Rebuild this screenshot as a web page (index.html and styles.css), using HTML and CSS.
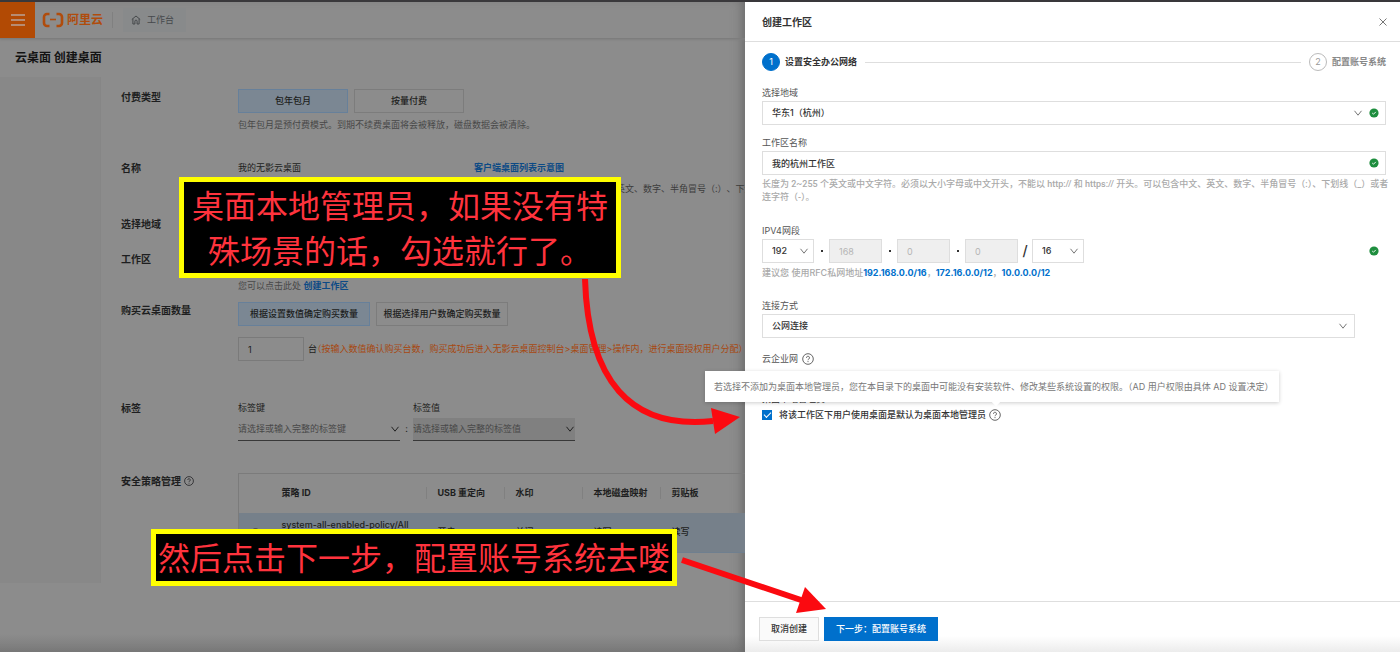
FILE: index.html
```html
<!DOCTYPE html>
<html lang="zh-CN">
<head>
<meta charset="utf-8">
<title>云桌面 创建桌面</title>
<link rel="stylesheet" href="styles.css">
</head>
<body>
<svg class="defs" width="0" height="0" aria-hidden="true">
  <symbol id="chevron" viewBox="0 0 10 10"><path d="M1.5 2.8 5 7.2 8.500 2.800" fill="none" stroke="currentColor"/></symbol>
  <symbol id="ok" viewBox="0 0 10 10"><circle cx="5" cy="5" r="4.600" fill="#1e8e3e"/><path d="M3.200 5 4.500 6.200 6.800 3.900" fill="none" stroke="#fff" stroke-width="0.900"/></symbol>
  <symbol id="help" viewBox="0 0 12 12"><circle cx="6" cy="6" r="5.300" fill="none" stroke="currentColor" stroke-width="0.900"/><path d="M4.500 4.800a1.500 1.500 0 1 1 2.300 1.200c-.6.400-.8.600-.8 1.200M6 8.100v1" fill="none" stroke="currentColor" stroke-width="0.900"/></symbol>
</svg>
<div class="screen">
  <div class="page">
    <header class="topbar">
      <button class="menu" type="button" aria-label="菜单">
        <svg width="16" height="14" viewBox="0 0 16 14"><path d="M1 2h14M1 7h14M1 12h14" stroke="#b9a396" stroke-width="1.300"/></svg>
      </button>
      <a class="logo" href="#">
        <svg width="22" height="16" viewBox="0 0 22 16"><path d="M7.500 2H5a3 3 0 0 0-3 3v6a3 3 0 0 0 3 3h2.500M14.500 2H17a3 3 0 0 1 3 3v6a3 3 0 0 1-3 3h-2.500" fill="none" stroke="currentColor" stroke-width="2.600"/><path d="M8 7.500h6" stroke="currentColor" stroke-width="1.600"/></svg>
        <span>阿里云</span>
      </a>
      <a class="workbench" href="#">
        <svg width="10" height="10" viewBox="0 0 10 10"><path d="M.8 4.500 5 1l4.200 3.500M1.900 3.800V9h2V6.200a1.100 1.100 0 0 1 2.200 0V9h2V3.800" fill="none" stroke="currentColor"/></svg>
        <span>工作台</span>
      </a>
    </header>
    <h1 class="page-title">云桌面 创建桌面</h1>
    <div class="body">
      <aside class="side"></aside>
      <main class="form">
        <section class="row row-pay">
          <h2>付费类型</h2>
          <div>
            <div class="options"><button type="button" class="opt opt-on opt-s">包年包月</button><button type="button" class="opt opt-s">按量付费</button></div>
            <p class="note">包年包月是预付费模式。到期不续费桌面将会被释放，磁盘数据会被清除。</p>
          </div>
        </section>
        <section class="row row-name">
          <h2>名称</h2>
          <div>
            <div class="name-line"><span>我的无影云桌面</span><a href="#">客户端桌面列表示意图</a></div>
            <p class="name-note">英文、数字、半角冒号（:）、下划线</p>
          </div>
        </section>
        <section class="row row-region"><h2>选择地域</h2></section>
        <section class="row row-space">
          <h2>工作区</h2>
          <p class="note space-note">您可以点击此处 <a href="#">创建工作区</a></p>
        </section>
        <section class="row row-count">
          <h2>购买云桌面数量</h2>
          <div>
            <div class="options"><button type="button" class="opt opt-on opt-l">根据设置数值确定购买数量</button><button type="button" class="opt opt-l">根据选择用户数确定购买数量</button></div>
            <div class="count"><input id="count" type="text" value="1"><label for="count">台<em>（按输入数值确认购买台数，购买成功后进入无影云桌面控制台&gt;桌面管理&gt;操作内，进行桌面授权用户分配）</em></label></div>
          </div>
        </section>
        <section class="row row-tag">
          <h2>标签</h2>
          <div class="tags">
            <label class="tag">标签键<span class="line-select"><select><option>请选择或输入完整的标签键</option></select><svg class="chev"><use href="#chevron"/></svg></span></label>
            <span class="colon">:</span>
            <label class="tag">标签值<span class="line-select filled"><select><option>请选择或输入完整的标签值</option></select><svg class="chev"><use href="#chevron"/></svg></span></label>
          </div>
        </section>
        <section class="row row-policy">
          <h2>安全策略管理 <svg class="help-s"><use href="#help"/></svg></h2>
          <table class="policy">
            <thead><tr><th class="c-radio"></th><th class="c-id">策略 ID</th><th class="c-mid">USB 重定向</th><th class="c-mid">水印</th><th class="c-mid">本地磁盘映射</th><th class="c-last">剪贴板</th></tr></thead>
            <tbody><tr><td><input type="radio" aria-label="选择策略"></td><td class="policy-id">system-all-enabled-policy/All</td><td>开启</td><td>关闭</td><td>读写</td><td>读写</td></tr></tbody>
          </table>
        </section>
      </main>
    </div>
  </div>

  <section class="drawer">
    <header class="drawer-head">
      <h2>创建工作区</h2>
      <button type="button" class="close" aria-label="关闭"><svg width="10" height="10" viewBox="0 0 10 10"><path d="M1.500 1.500l7 7M8.500 1.500l-7 7" stroke="#666" stroke-width="0.900"/></svg></button>
    </header>
    <div class="drawer-body">
      <ol class="steps">
        <li class="step step-on"><b>1</b><span>设置安全办公网络</span></li>
        <li class="step-line"></li>
        <li class="step"><b>2</b><span>配置账号系统</span></li>
      </ol>
      <div class="field">
        <label for="region">选择地域</label>
        <div class="control"><select id="region"><option>华东1（杭州）</option></select><svg class="chev chev-in"><use href="#chevron"/></svg><svg class="ok"><use href="#ok"/></svg></div>
      </div>
      <div class="field">
        <label for="wsname">工作区名称</label>
        <div class="control"><input id="wsname" type="text" value="我的杭州工作区"><svg class="ok"><use href="#ok"/></svg></div>
        <p class="hint hint-name">长度为 2~255 个英文或中文字符。必须以大小字母或中文开头，不能以 http:// 和 https:// 开头。可以包含中文、英文、数字、半角冒号（:）、下划线（_）或者<br>连字符（-）。</p>
      </div>
      <div class="field field-ip">
        <label for="ip1">IPV4网段</label>
        <div class="ip">
          <div class="control"><select id="ip1"><option>192</option></select><svg class="chev"><use href="#chevron"/></svg></div>
          <span class="dot"></span><input type="text" value="168" disabled aria-label="第二段">
          <span class="dot"></span><input type="text" value="0" disabled aria-label="第三段">
          <span class="dot"></span><input type="text" value="0" disabled aria-label="第四段">
          <span class="slash">/</span>
          <div class="control"><select aria-label="掩码"><option>16</option></select><svg class="chev"><use href="#chevron"/></svg></div>
          <svg class="ok ok-end"><use href="#ok"/></svg>
        </div>
        <p class="hint">建议您 使用RFC私网地址<a href="#">192.168.0.0/16</a>，<a href="#">172.16.0.0/12</a>，<a href="#">10.0.0.0/12</a></p>
      </div>
      <div class="field field-link">
        <label for="link">连接方式</label>
        <div class="control"><select id="link"><option>公网连接</option></select><svg class="chev"><use href="#chevron"/></svg></div>
      </div>
      <div class="label-row">云企业网 <svg class="help"><use href="#help"/></svg></div>
      <div class="admin">
        <div class="admin-title">桌面本地管理员</div>
        <div class="check"><input type="checkbox" id="admin" checked><label for="admin">将该工作区下用户使用桌面是默认为桌面本地管理员</label><svg class="help"><use href="#help"/></svg></div>
        <div class="tooltip" role="tooltip">若选择不添加为桌面本地管理员，您在本目录下的桌面中可能没有安装软件、修改某些系统设置的权限。（AD 用户权限由具体 AD 设置决定）</div>
      </div>
    </div>
    <footer class="drawer-foot">
      <button type="button" class="btn">取消创建</button>
      <button type="button" class="btn btn-primary">下一步：配置账号系统</button>
    </footer>
  </section>

  <div class="callout callout-top">桌面本地管理员，如果没有特<br>殊场景的话，勾选就行了。</div>
  <div class="callout callout-bottom">然后点击下一步，配置账号系统去喽</div>
  <svg class="arrows" width="840" height="640" viewBox="0 0 840 640" aria-hidden="true">
    <path d="M585 279C588 380 630 430 713 421" fill="none" stroke="#fb0a10" stroke-width="6"/>
    <path d="M711 408 740 417 715 434Z" fill="#fb0a10"/>
    <path d="M682 560 804 601" stroke="#fb0a10" stroke-width="6"/>
    <path d="M805 587 826 609 796 613Z" fill="#fb0a10"/>
  </svg>
</div>
</body>
</html>
```
FILE: styles.css
```css
* { box-sizing: border-box; }
body { margin: 0; font: 9px/14px Inter, "Noto Sans CJK SC", sans-serif; color: #333; text-spacing-trim: space-all; }
h1, h2, p, ol { margin: 0; padding: 0; font-weight: 500; }
a { text-decoration: none; color: #0070cc; }
button, input, select { font: inherit; color: inherit; margin: 0; border-radius: 0; }
button { padding: 0; cursor: pointer; }
select { appearance: none; }
.defs { position: absolute; }

.screen { position: relative; display: grid; grid-template-columns: minmax(0, 745fr) minmax(0, 655fr); min-height: 100vh; border-top: 2px solid #39383b; overflow: hidden; }

/* Dimmed page behind the drawer */
.page { background: linear-gradient(#8c8c8c, #7a7a7a) bottom / 100% 18px no-repeat #8c8c8c; color: #1d1e20; overflow: hidden; white-space: nowrap; box-shadow: inset -8px 0 12px -6px #666; }
.page a { color: #0c4a85; font-weight: 700; }
.topbar { display: flex; align-items: center; height: 37px; border-bottom: 1px solid #7d7d7d; box-shadow: 0 1px 2px #808080; }
.menu { display: grid; place-items: center; width: 35px; height: 100%; border: 0; background: #b24a04; }
.page .logo { display: flex; align-items: center; gap: 3px; margin-left: 7px; padding-right: 9px; border-right: 1px solid #808080; color: #b04c0c; font-size: 12px; font-weight: 700; }
.page .workbench { display: flex; align-items: center; gap: 6px; height: 24px; margin-left: 10px; padding: 0 12px 0 8px; background: #888a8b; color: #45484b; font-weight: 400; }
.page-title { padding: 10px 15px; font-size: 12px; line-height: 18px; font-weight: 700; color: #131313; }
.body { display: grid; grid-template-columns: 101px minmax(0, 1fr); min-height: 506px; }
.side { background: #888; border-right: 1px solid #868686; }
.form { padding: 12px 0 0 20px; }
.row { display: grid; grid-template-columns: 117px minmax(0, 1fr); align-items: start; }
.row h2 { display: flex; align-items: center; gap: 3px; font-size: 10px; line-height: 16px; font-weight: 700; }
.row-pay { min-height: 71px; }
.row-name { min-height: 56px; }
.row-region { min-height: 35px; }
.row-space { min-height: 51px; }
.row-count { min-height: 98px; }
.row-tag { min-height: 73px; }
.options { display: flex; gap: 6px; }
.opt { height: 24px; border: 1px solid #7c7c7c; background: transparent; font-weight: 500; }
.opt-on { background: #7b8793; border-color: #67809a; }
.opt-s { width: 110px; }
.opt-l { width: 132px; }
.note { margin-top: 5px; color: #484848; font-weight: 400; }
.space-note { margin-top: 28px; }
.name-line { display: grid; grid-template-columns: 236px 1fr; line-height: 16px; }
.name-note { margin-top: 6px; padding-left: 378px; font-weight: 400; color: #3c3c3c; }
.count { display: flex; align-items: center; gap: 4px; margin-top: 11px; }
.count input { width: 66px; height: 24px; padding: 0 9px; border: 1px solid #7a7a7a; background: transparent; }
.count em { display: inline-block; font-style: normal; color: #a74810; text-spacing-trim: trim-start; }
.tags { display: flex; align-items: flex-end; }
.tag { display: block; width: 162px; line-height: 16px; }
.line-select { display: block; position: relative; margin-top: 2px; border-bottom: 1px solid #383838; }
.line-select select { width: 100%; height: 22px; padding: 0; border: 0; background: transparent; color: #484848; }
.filled { background: #808080; }
.chev { position: absolute; right: 0; top: 50%; width: 10px; height: 10px; margin-top: -5px; pointer-events: none; color: #777; }
.page .chev { color: #222; }
.colon { width: 13px; line-height: 24px; text-align: center; }
.help-s { width: 10px; height: 10px; }
.policy { width: 100%; table-layout: fixed; border-collapse: collapse; border: 1px solid #7b7b7b; border-right: 0; font-weight: 500; }
.policy th { height: 39px; padding: 0; text-align: left; font-weight: 700; }
.policy td { height: 40px; padding: 0; }
.policy th + th + th { background: linear-gradient(#808080, #808080) -1px 50% / 1px 12px no-repeat; background-position: 0 50%; background-origin: border-box; }
.policy th + th + th { padding-left: 12px; }
.policy td + td + td { padding-left: 12px; }
.policy tbody tr { background: #76808a; border-bottom: 1px solid #6f7f8f; }
.policy input { display: block; width: 9px; height: 9px; margin: 0 12px; appearance: none; border: 1px solid #444; border-radius: 50%; }
.policy td.policy-id { padding-top: 3px; vertical-align: top; line-height: 18px; }
.c-radio { width: 43px; }
.c-id { width: 144px; }
.c-mid { width: 78px; }
.c-last { width: auto; }

/* Drawer */
.drawer { display: flex; flex-direction: column; min-width: 0; background: #fff; }
.drawer-head { display: flex; align-items: center; justify-content: space-between; height: 40px; padding: 0 12px 0 17px; border-bottom: 1px solid #dedede; }
.drawer-head h2 { font-size: 10px; font-weight: 700; }
.close { width: 10px; height: 10px; border: 0; background: none; line-height: 0; }
.drawer-body { flex: 1; padding: 11px 14px 0 17px; }
.steps { display: flex; align-items: center; gap: 8px; list-style: none; }
.step { display: flex; align-items: center; gap: 5px; font-weight: 700; color: #888; }
.step b { display: grid; place-items: center; width: 18px; height: 18px; border: 1px solid #bbb; border-radius: 50%; font-weight: 400; color: #999; }
.step-on { color: #333; }
.step-on b { background: #0070cc; border-color: #0070cc; color: #fff; }
.step-line { flex: 1; height: 1px; background: #dedede; }
.field { margin-top: 14px; }
.field label { display: block; line-height: 16px; color: #555; }
.field:not(:nth-child(2)) { margin-top: 10px; }
.control { position: relative; }
.control select, .control input, .ip input { display: block; width: 100%; height: 24px; padding: 0 9px; border: 1px solid #dedede; background: #fff; font-weight: 500; }
.control .chev { right: 7px; }
.control .chev-in { right: 23px; }
.ok { position: absolute; right: 7px; top: 50%; width: 10px; height: 10px; margin-top: -5px; }
.hint { margin-top: 3px; line-height: 13px; color: #aaa; }
.hint-name { font-family: Roboto, "Noto Sans CJK SC", sans-serif; white-space: nowrap; text-spacing-trim: normal; }
.hint a { font-weight: 700; }
.drawer-body .field-ip { margin-top: 19px; }
.ip { position: relative; display: flex; align-items: center; }
.ip .control, .ip input { width: 52px; }
.ip .control .chev { right: 5px; }
.ip input:disabled { width: 53px; background: #efefef; color: #b5b5b5; font-weight: 400; }
.dot { width: 2px; height: 2px; margin: 0 6px 0 7px; background: #333; }
.slash { width: 14px; text-align: center; font-size: 14px; font-weight: 500; }
.drawer-body .field-link { margin-top: 19px; }
.field-link .control { margin-right: 31px; }
.label-row { display: flex; align-items: center; gap: 4px; margin-top: 13px; line-height: 16px; color: #555; }
.help { width: 12px; height: 12px; color: #555; }
.admin { position: relative; margin-top: 24px; }
.admin-title { line-height: 16px; }
.check { display: flex; align-items: center; gap: 3px; height: 16px; font-weight: 500; }
.check input { appearance: none; width: 10px; height: 10px; margin-right: 4px; background: #0070cc; display: grid; place-items: center; }
.check input::before { content: ""; width: 6px; height: 3px; margin-top: -2px; border-left: 1px solid #fff; border-bottom: 1px solid #fff; transform: rotate(-45deg); }
.tooltip { position: absolute; left: -57px; top: -20px; padding: 8px 5px 8px 9px; background: #fff; color: #777; line-height: 15px; white-space: nowrap; text-spacing-trim: normal; box-shadow: 0 1px 4px rgba(0, 0, 0, 0.2); }
.tooltip::after { content: ""; position: absolute; right: 280px; bottom: -3px; width: 6px; height: 6px; background: #fff; transform: rotate(45deg); }
.drawer-foot { display: flex; align-items: flex-start; gap: 5px; height: 51px; padding: 15px 14px 0; border-top: 1px solid #dedede; background: linear-gradient(#fff, #ececec) bottom / 100% 16px no-repeat; }
.btn { height: 24px; padding: 0 11px; border: 1px solid #dedede; background: #fafafa; font-weight: 500; }
.btn-primary { border-color: #0070cc; background: #0070cc; color: #fff; }

/* Annotations */
.callout { position: absolute; border: 5px solid #ffff00; background: #000; color: #ff333d; font-family: "Noto Sans CJK SC", sans-serif; font-size: 32px; line-height: 45px; font-weight: 400; text-align: center; white-space: nowrap; }
.callout-top { left: 179px; top: 175px; padding: 0 8px 1px; }
.callout-bottom { left: 151px; top: 527px; padding: 0 2px 2px; }
.arrows { position: absolute; left: 0; top: -2px; pointer-events: none; }
```
